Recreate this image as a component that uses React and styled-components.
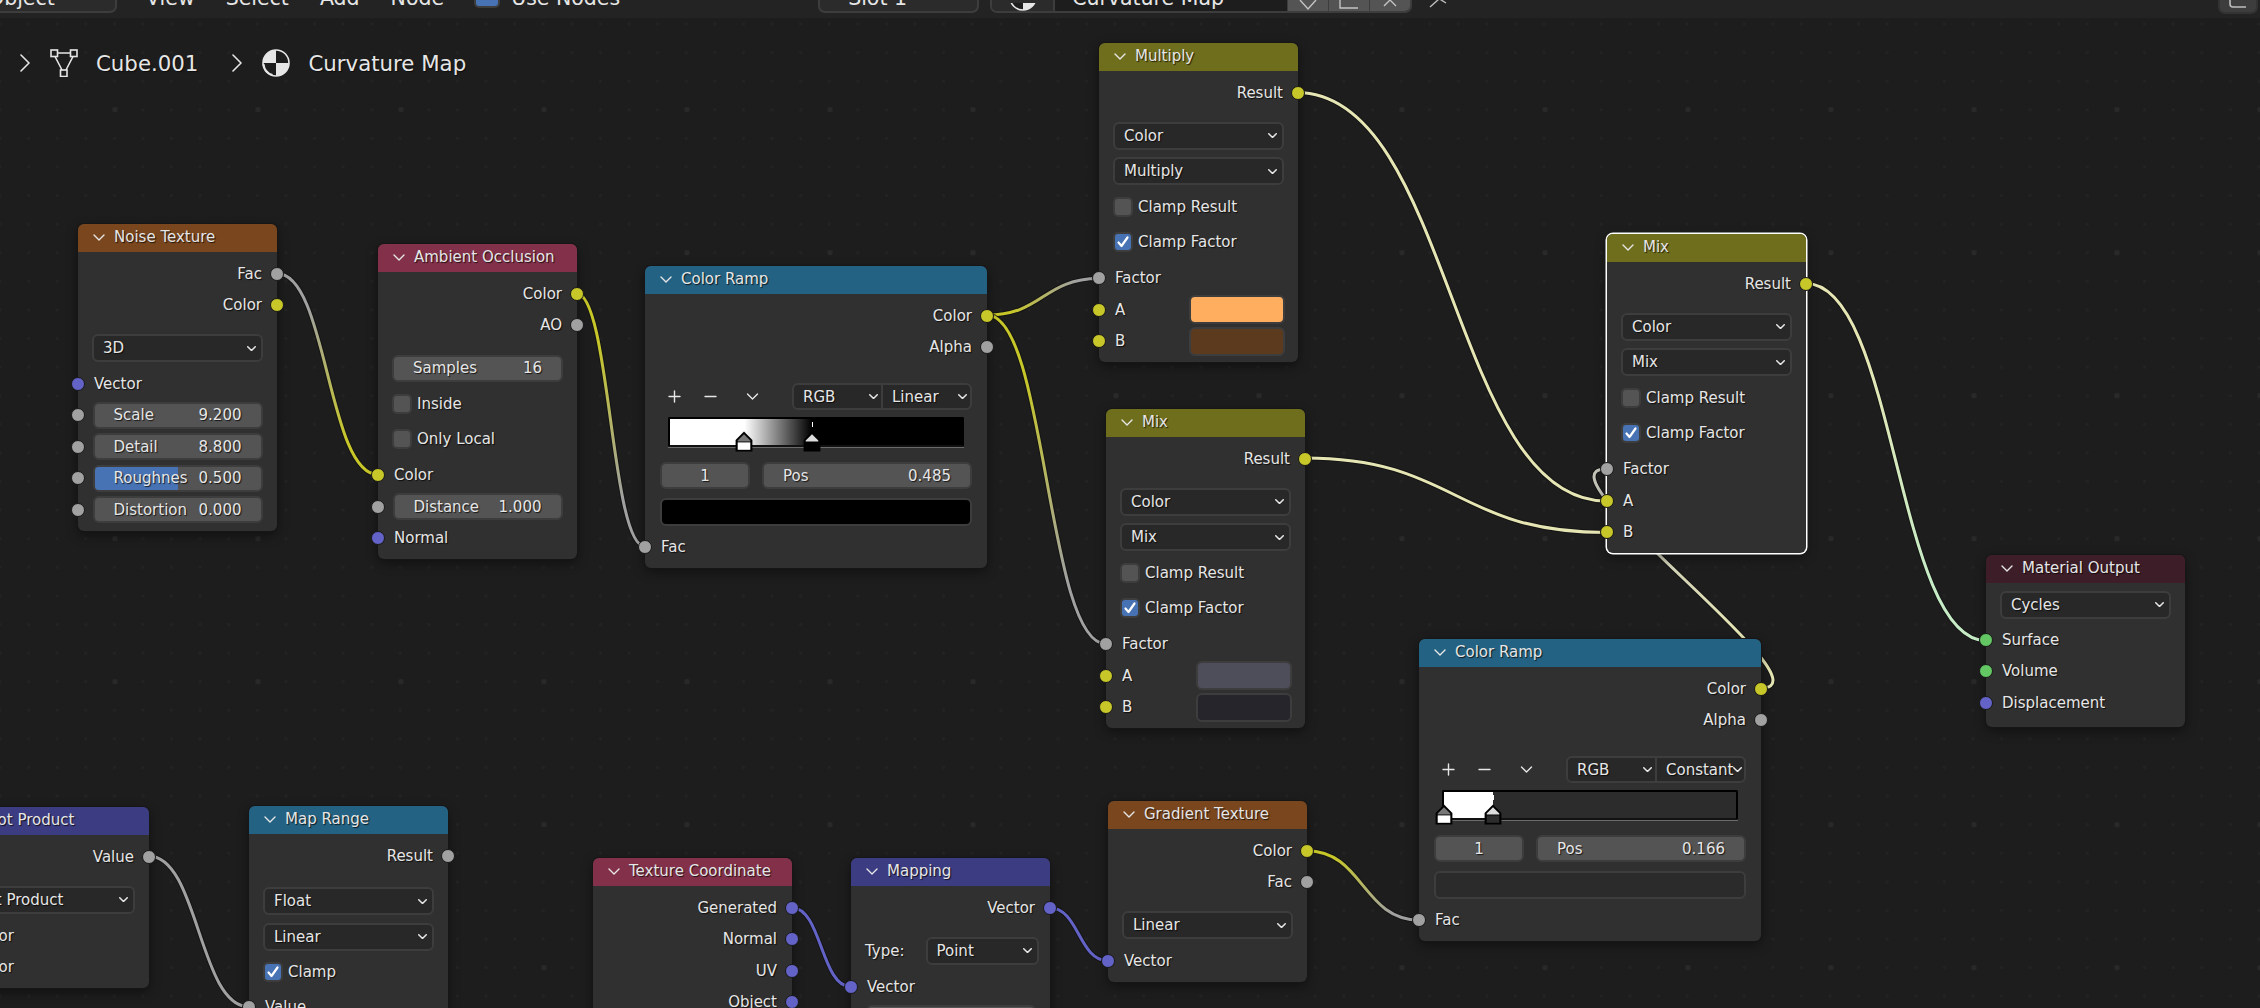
import styled, { createGlobalStyle } from "styled-components";

const YELLOW = "#c7c729";
const GRAY = "#a1a1a1";
const BLUE = "#6363c7";
const GREEN = "#63c763";
const PALE = "#e6e6b4";

const HEAD_TEXTURE = "#79461d";
const HEAD_INPUT = "#83314a";
const HEAD_CONVERT = "#246283";
const HEAD_COLOR = "#6e6e1d";
const HEAD_VECTOR = "#3c3c83";
const HEAD_OUTPUT = "#3d1e28";

// links, in page coordinates (drawn under the nodes)
const wires = [
  { a: [277, 273.6], b: [378, 474.6], c1: GRAY, c2: YELLOW },
  { a: [576, 293], b: [645, 546.5], c1: YELLOW, c2: GRAY },
  { a: [987, 315], b: [1099, 278.6], c1: YELLOW, c2: GRAY },
  { a: [987, 315], b: [1106, 644], c1: YELLOW, c2: GRAY },
  { a: [1297, 92.6], b: [1606, 501], c1: PALE, c2: PALE },
  { a: [1305, 458], b: [1606, 532.5], c1: PALE, c2: PALE },
  { a: [1806, 283.6], b: [1986, 640.7], c1: PALE, c2: "#c6ecc6" },
  { a: [1761, 688], b: [1606, 469], c1: PALE, c2: "#c4c4b8", handle: 75 },
  { a: [148.5, 856], b: [249, 1006.7], c1: GRAY, c2: GRAY },
  { a: [792, 907.7], b: [850.6, 986.7], c1: BLUE, c2: BLUE },
  { a: [1049.6, 907.7], b: [1107.8, 960.7], c1: BLUE, c2: BLUE },
  { a: [1306.7, 850.7], b: [1419, 920], c1: YELLOW, c2: GRAY },
];

const wirePath = ({ a, b, handle }) => {
  const h = handle ?? Math.abs(b[0] - a[0]) * 0.5;
  return `M${a[0]} ${a[1]} C${a[0] + h} ${a[1]} ${b[0] - h} ${b[1]} ${b[0]} ${b[1]}`;
};

const GlobalStyle = createGlobalStyle`
  html, body {
    margin: 0;
    background: #1d1d1d;
  }
  body {
    font-family: "DejaVu Sans", sans-serif;
    color: #e6e6e6;
    overflow: hidden;
  }
`;

const Page = styled.div`
  width: 2260px;
  height: 1008px;
  display: flex;
  flex-direction: column;
  overflow: hidden;
`;

const TopBar = styled.header`
  height: 18px;
  flex: none;
  box-sizing: border-box;
  padding-bottom: 5px;
  background: #232323;
  display: flex;
  align-items: flex-end;
  overflow: hidden;
  font-size: 20.5px;
  line-height: 20px;
`;

const BarBox = styled.div`
  flex: none;
  box-sizing: border-box;
  height: 28px;
  width: ${(p) => p.$w}px;
  margin-left: ${(p) => p.$ml || 0}px;
  padding: 0 0 3px ${(p) => p.$pl || 10}px;
  display: flex;
  align-items: flex-end;
  background: #2b2b2b;
  border: 2px solid #3d3d3d;
  border-radius: 7px;
`;

const Menu = styled.nav`
  display: flex;
  gap: 31px;
  margin-left: 29px;
  margin-bottom: 5.5px;
`;

const MenuItem = styled.span`
  flex: none;
`;

const BarCheck = styled.div`
  flex: none;
  box-sizing: border-box;
  width: 26px;
  height: 24px;
  margin-left: 30px;
  margin-bottom: 5px;
  background: #4772b3;
  border: 2px solid #3d3d3d;
  border-radius: 5px;
`;

const BarLabel = styled.span`
  flex: none;
  margin-left: 11px;
  margin-bottom: 5.5px;
`;

const MaterialGroup = styled.div`
  flex: none;
  box-sizing: border-box;
  width: 422px;
  height: 28px;
  margin-left: 11px;
  display: flex;
  border: 2px solid #3d3d3d;
  border-radius: 7px;
  overflow: hidden;
`;

const MatIconCell = styled.div`
  flex: none;
  width: 61px;
  background: #2b2b2b;
  border-right: 2px solid #3d3d3d;
  display: flex;
  align-items: flex-end;
  justify-content: center;
`;

const MatName = styled.div`
  flex: 1;
  background: #1d1d1d;
  padding-left: 17px;
  line-height: 20px;
  display: flex;
  align-items: flex-end;
  padding-bottom: 3px;
`;

const MatButton = styled.div`
  flex: none;
  width: 40px;
  background: #545454;
  border-left: 1px solid #3d3d3d;
  display: flex;
  align-items: flex-end;
  justify-content: center;
`;

const PinIcon = styled.svg`
  flex: none;
  margin-left: 17px;
  margin-bottom: 5px;
`;

const CornerBox = styled.div`
  flex: none;
  box-sizing: border-box;
  width: 40px;
  height: 28px;
  margin-left: auto;
  margin-right: 2px;
  margin-bottom: -1px;
  background: #3d3d3d;
  border: 2px solid #333;
  border-radius: 7px;
  display: flex;
  align-items: flex-end;
  justify-content: center;
`;

const Canvas = styled.main`
  position: relative;
  flex: 1;
  background-color: #1d1d1d;
  background-image:
    radial-gradient(circle, #292929 2.6px, transparent 3px),
    radial-gradient(circle, #232323 1.3px, transparent 1.7px);
  background-size: 143px 143px, 28.6px 28.6px;
  background-position: 43.5px 20.2px, -14.3px -8.3px;
`;

const WireLayer = styled.svg`
  position: absolute;
  left: 0;
  top: -18px;
  width: 2260px;
  height: 1008px;
`;

const Breadcrumb = styled.div`
  position: absolute;
  left: 20px;
  top: 31px;
  display: flex;
  align-items: center;
  height: 28px;
  font-size: 21.3px;
`;

const CrumbIcon = styled.svg`
  flex: none;
  margin-left: ${(p) => p.$ml}px;
`;

const CrumbText = styled.span`
  margin-left: 18px;
  text-shadow: 1px 1px 1px rgba(0, 0, 0, 0.6);
`;

const NodeBox = styled.section`
  position: absolute;
  left: ${(p) => p.$x}px;
  top: ${(p) => p.$y - 18}px;
  width: ${(p) => p.$w}px;
  background: #303030;
  border-radius: 6px;
  font-size: 15px;
  text-shadow: 1px 1px 1px rgba(0, 0, 0, 0.75);
  box-shadow: ${(p) =>
    p.$selected
      ? "0 0 0 1.5px #fff, 0 4px 12px rgba(0,0,0,.45)"
      : "0 0 0 1px #161616, 0 4px 12px rgba(0,0,0,.45)"};
`;

const NodeHeader = styled.header`
  height: 28px;
  box-sizing: border-box;
  padding: 0 0 2px 15px;
  display: flex;
  align-items: center;
  gap: 9px;
  background: ${(p) => p.$color};
  border-radius: 6px 6px 0 0;
`;

const NodeBody = styled.div`
  display: flex;
  flex-direction: column;
  padding: 6px 0 ${(p) => p.$pb || 5.25}px;
`;

const Row = styled.div`
  position: relative;
  flex: none;
  height: 31.5px;
  box-sizing: border-box;
  margin-top: ${(p) => p.$mt || 0}px;
  padding: ${(p) => (p.$out ? "0 15px 0 0" : "0 13px 0 16px")};
  display: flex;
  align-items: center;
  justify-content: ${(p) => (p.$out ? "flex-end" : "flex-start")};
  ${(p) => p.$wide && "padding: 0 14.5px;"}
`;

const Socket = styled.i`
  position: absolute;
  top: 50%;
  ${(p) => (p.$out ? "right: -7px;" : "left: -7px;")}
  width: 14px;
  height: 14px;
  margin-top: -7px;
  box-sizing: border-box;
  border-radius: 50%;
  background: ${(p) => p.$color};
  border: 1px solid #181818;
`;

const WidgetRow = styled.div`
  flex: none;
  height: 35.5px;
  box-sizing: border-box;
  margin-top: ${(p) => p.$mt || 0}px;
  padding: 0 14px;
  display: flex;
  align-items: center;
  gap: ${(p) => p.$gap || 5}px;
`;

const Dropdown = styled.div`
  box-sizing: border-box;
  flex: ${(p) => (p.$w ? "none" : 1)};
  width: ${(p) => (p.$w ? `${p.$w}px` : "auto")};
  height: 28px;
  margin-left: ${(p) => p.$ml || 0}px;
  padding: 0 5px 0 9px;
  display: flex;
  align-items: center;
  justify-content: space-between;
  background: #282828;
  border: 2px solid #3d3d3d;
  border-radius: 6px;
`;

const Field = styled.div`
  position: relative;
  flex: 1;
  box-sizing: border-box;
  height: 27px;
  padding: 0 19px;
  display: flex;
  align-items: center;
  justify-content: ${(p) => (p.$center ? "center" : "space-between")};
  background: #545454;
  border: 2px solid #3d3d3d;
  border-radius: 6px;
  overflow: hidden;
  white-space: nowrap;
`;

const FieldFill = styled.span`
  position: absolute;
  left: 0;
  top: 0;
  bottom: 0;
  width: ${(p) => p.$value * 100}%;
  background: #4772b3;
`;

const FieldText = styled.span`
  position: relative;
`;

const CheckBox = styled.span`
  flex: none;
  box-sizing: border-box;
  width: 20px;
  height: 20px;
  display: flex;
  align-items: center;
  justify-content: center;
  background: ${(p) => (p.$on ? "#4772b3" : "#545454")};
  border: 2px solid #3d3d3d;
  border-radius: 5px;
`;

const Swatch = styled.span`
  flex: none;
  box-sizing: border-box;
  width: 96px;
  height: 29px;
  margin-left: auto;
  background: ${(p) => p.$color};
  border: 2px solid #3d3d3d;
  border-radius: 6px;
`;

const ChevIcon = styled.svg`
  flex: none;
  fill: none;
  stroke: ${(p) => p.$stroke || "#e6e6e6"};
  stroke-linecap: round;
  stroke-linejoin: round;
`;

const RampTools = styled.div`
  flex: none;
  height: 27px;
  margin-top: 20px;
  padding: 0 15px 0 22.5px;
  display: flex;
  align-items: center;
`;

const ToolIcon = styled.svg`
  flex: none;
  margin-left: ${(p) => p.$ml || 0}px;
  fill: none;
  stroke: #e6e6e6;
  stroke-width: 1.4;
  stroke-linecap: round;
  stroke-linejoin: round;
`;

const Segmented = styled.div`
  flex: none;
  box-sizing: border-box;
  width: 180px;
  height: 27px;
  margin-left: auto;
  display: flex;
  background: #282828;
  border: 2px solid #3d3d3d;
  border-radius: 6px;
`;

const Segment = styled.div`
  box-sizing: border-box;
  flex: none;
  width: ${(p) => p.$w}px;
  padding: 0 3px 0 9px;
  display: flex;
  align-items: center;
  justify-content: space-between;
  ${(p) => p.$divided && "border-left: 2px solid #3d3d3d;"}
`;

const RampBar = styled.div`
  position: relative;
  flex: none;
  box-sizing: border-box;
  height: 30px;
  margin: 7px 23px 0;
  background: ${(p) => p.$fill};
  border: 2px solid #000;
  border-bottom-color: #111;
  border-radius: 2px;

  &::after {
    content: "";
    position: absolute;
    left: -2px;
    right: -2px;
    bottom: -3px;
    height: 1.5px;
    background: #6a6a6a;
  }
`;

const RampHandle = styled.svg`
  position: absolute;
  z-index: 1;
  left: ${(p) => p.$pos * 100}%;
  top: 12px;
  margin-left: -9px;
`;

const RampTick = styled.span`
  position: absolute;
  left: ${(p) => p.$pos * 100}%;
  top: 3px;
  width: 1px;
  height: 5px;
  background: #fff;
`;

const RampParams = styled.div`
  flex: none;
  margin-top: 15px;
  padding: 0 15px;
  display: flex;
  gap: 12px;
`;

const StopField = styled(Field)`
  flex: none;
  width: 90px;
`;

const RampColor = styled.div`
  flex: none;
  box-sizing: border-box;
  height: 28px;
  margin: 9px 15px 0;
  background: ${(p) => p.$color};
  border: 2px solid #3d3d3d;
  border-radius: 6px;
`;

const Chev = ({ w = 12, sw = 1.4, stroke }) => (
  <ChevIcon width={w} height={(w * 7) / 12} viewBox="0 0 12 7" strokeWidth={(sw * 12) / w} $stroke={stroke}>
    <path d="M1 1l5 5 5-5" />
  </ChevIcon>
);

const Node = ({ x, y, w = 199, color, title, selected, pb, children }) => (
  <NodeBox $x={x} $y={y} $w={w} $selected={selected}>
    <NodeHeader $color={color}>
      <Chev w={12} />
      <span>{title}</span>
    </NodeHeader>
    <NodeBody $pb={pb}>{children}</NodeBody>
  </NodeBox>
);

const Output = ({ socket, children }) => (
  <Row $out>
    {children}
    <Socket $out $color={socket} />
  </Row>
);

const Input = ({ socket, mt, children }) => (
  <Row $mt={mt}>
    {children}
    <Socket $color={socket} />
  </Row>
);

const ValueInput = ({ label, value, fill }) => (
  <Row $wide>
    <Socket $color={GRAY} />
    <Field>
      {fill ? <FieldFill $value={fill} /> : null}
      <FieldText>{label}</FieldText>
      <FieldText>{value}</FieldText>
    </Field>
  </Row>
);

const Select = ({ children, mt }) => (
  <WidgetRow $mt={mt}>
    <Dropdown>
      <span>{children}</span>
      <Chev w={9} sw={1.5} />
    </Dropdown>
  </WidgetRow>
);

const Check = ({ on, children }) => (
  <WidgetRow>
    <CheckBox $on={on}>
      {on ? (
        <svg width="14" height="14" viewBox="0 0 14 14" fill="none" stroke="#fff" strokeWidth="2.2" strokeLinecap="round" strokeLinejoin="round">
          <path d="M2.5 7.5l3 3.5 6-8.5" />
        </svg>
      ) : null}
    </CheckBox>
    <span>{children}</span>
  </WidgetRow>
);

const Handle = ({ pos, cap, fill }) => (
  <RampHandle $pos={pos} width="18" height="21" viewBox="0 0 18 21">
    <path d="M9 .6L17.4 9V20.4H.6V9Z" fill="#000" />
    <path d="M9 3.2L15.3 9.5V10.6H2.7V9.5Z" fill={cap} />
    <rect x="2.7" y="11.4" width="12.6" height="7.4" fill={fill} />
  </RampHandle>
);

const ColorRampBody = ({ mode, fill, stops, pos, field }) => (
  <>
    <Output socket={YELLOW}>Color</Output>
    <Output socket={GRAY}>Alpha</Output>
    <RampTools>
      <ToolIcon width="13" height="13" viewBox="0 0 13 13">
        <path d="M6.5 1v11M1 6.5h11" />
      </ToolIcon>
      <ToolIcon $ml={23} width="13" height="13" viewBox="0 0 13 13">
        <path d="M1 6.5h11" />
      </ToolIcon>
      <ToolIcon $ml={29} width="13" height="13" viewBox="0 0 13 13">
        <path d="M1.5 4l5 5 5-5" />
      </ToolIcon>
      <Segmented>
        <Segment $w={87}>
          <span>RGB</span>
          <Chev w={9} sw={1.5} />
        </Segment>
        <Segment $w={89} $divided>
          <span>{mode}</span>
          <Chev w={9} sw={1.5} />
        </Segment>
      </Segmented>
    </RampTools>
    <RampBar $fill={fill}>
      <RampTick $pos={stops[1].pos} />
      {stops.map((s) => (
        <Handle key={s.pos} pos={s.pos} cap={s.cap} fill={s.fill} />
      ))}
    </RampBar>
    <RampParams>
      <StopField $center>1</StopField>
      <Field>
        <span>Pos</span>
        <span>{pos}</span>
      </Field>
    </RampParams>
    <RampColor $color={field} />
    <Input socket={GRAY} mt={4.75}>
      Fac
    </Input>
  </>
);

const MaterialIcon = ({ ml }) => (
  <CrumbIcon $ml={ml} width="28" height="28" viewBox="0 0 28 28">
    <circle cx="14" cy="14" r="13" fill="#1d1d1d" stroke="#e6e6e6" strokeWidth="1.6" />
    <path d="M14 1a13 13 0 0 0-13 13h13z" fill="#e6e6e6" />
    <path d="M14 14h13a13 13 0 0 1-13 13z" fill="#e6e6e6" />
    <path d="M1.5 15a13 13 0 0 0 9 11" fill="none" stroke="#e6e6e6" strokeWidth="2" />
  </CrumbIcon>
);

const App = () => (
  <>
    <GlobalStyle />
    <Page>
      <TopBar>
        <BarBox $w={147} $ml={-30} $pl={16}>
          Object
        </BarBox>
        <Menu>
          <MenuItem>View</MenuItem>
          <MenuItem>Select</MenuItem>
          <MenuItem>Add</MenuItem>
          <MenuItem>Node</MenuItem>
        </Menu>
        <BarCheck />
        <BarLabel>Use Nodes</BarLabel>
        <BarBox $w={161} $ml={198} $pl={28}>
          Slot 1
        </BarBox>
        <MaterialGroup>
          <MatIconCell>
            <svg width="28" height="8" viewBox="0 20 28 8">
              <circle cx="14" cy="14" r="13" fill="#1d1d1d" />
              <path d="M14 14h13a13 13 0 0 1-13 13z" fill="#e6e6e6" />
              <circle cx="14" cy="14" r="13" fill="none" stroke="#e6e6e6" strokeWidth="1.6" />
            </svg>
          </MatIconCell>
          <MatName>Curvature Map</MatName>
          <MatButton>
            <svg width="18" height="11" viewBox="0 0 18 11" fill="none" stroke="#c4c4c4" strokeWidth="1.4">
              <path d="M1 0l8 9 8-9" />
            </svg>
          </MatButton>
          <MatButton>
            <svg width="20" height="11" viewBox="0 0 20 11" fill="none" stroke="#c4c4c4" strokeWidth="1.4">
              <path d="M1 0v8h18" />
            </svg>
          </MatButton>
          <MatButton>
            <svg width="18" height="11" viewBox="0 0 18 11" fill="none" stroke="#c4c4c4" strokeWidth="1.4">
              <path d="M9 0L3 6M9 0l6 6" />
            </svg>
          </MatButton>
        </MaterialGroup>
        <PinIcon width="20" height="10" viewBox="0 0 20 10" fill="none" stroke="#bdbdbd" strokeWidth="1.4">
          <path d="M1 9l9-8M9 0l8 5" />
        </PinIcon>
        <CornerBox>
          <svg width="18" height="9" viewBox="0 0 18 9" fill="none" stroke="#bdbdbd" strokeWidth="1.6" style={{ marginBottom: 3 }}>
            <path d="M1 0v4q0 3 3 3h13" />
          </svg>
        </CornerBox>
      </TopBar>

      <Canvas>
        <WireLayer viewBox="0 0 2260 1008" fill="none">
          <defs>
            {wires.map((w, i) => (
              <linearGradient key={i} id={`wire${i}`} gradientUnits="userSpaceOnUse" x1={w.a[0]} y1={w.a[1]} x2={w.b[0]} y2={w.b[1]}>
                <stop offset="0.2" stopColor={w.c1} />
                <stop offset="0.8" stopColor={w.c2} />
              </linearGradient>
            ))}
          </defs>
          {wires.map((w, i) => (
            <g key={i}>
              <path d={wirePath(w)} stroke="#111" strokeOpacity="0.75" strokeWidth="5" />
              <path d={wirePath(w)} stroke={`url(#wire${i})`} strokeWidth="3" />
            </g>
          ))}
        </WireLayer>

        <Breadcrumb>
          <ChevIcon width="10" height="18" viewBox="0 0 10 18" strokeWidth="1.6">
            <path d="M1 1l8 8-8 8" />
          </ChevIcon>
          <CrumbIcon $ml={20} width="28" height="28" viewBox="0 0 28 28" fill="none" stroke="#e6e6e6" strokeWidth="1.6">
            <rect x="1" y="1" width="6.5" height="6.5" />
            <rect x="20.5" y="1" width="6.5" height="6.5" />
            <rect x="10.5" y="21" width="6.5" height="6.5" />
            <path d="M7.5 4h13M5 7.5l7 13.5M23 7.5l-7 13.5" />
          </CrumbIcon>
          <CrumbText>Cube.001</CrumbText>
          <ChevIcon style={{ marginLeft: 34 }} width="10" height="18" viewBox="0 0 10 18" strokeWidth="1.6">
            <path d="M1 1l8 8-8 8" />
          </ChevIcon>
          <MaterialIcon ml={20} />
          <CrumbText>Curvature Map</CrumbText>
        </Breadcrumb>

        <Node x={78} y={224} color={HEAD_TEXTURE} title="Noise Texture">
          <Output socket={GRAY}>Fac</Output>
          <Output socket={YELLOW}>Color</Output>
          <Select mt={9.5}>3D</Select>
          <Input socket={BLUE} mt={2}>
            Vector
          </Input>
          <ValueInput label="Scale" value="9.200" />
          <ValueInput label="Detail" value="8.800" />
          <ValueInput label="Roughnes" value="0.500" fill={0.5} />
          <ValueInput label="Distortion" value="0.000" />
        </Node>

        <Node x={378} y={244} color={HEAD_INPUT} title="Ambient Occlusion">
          <Output socket={YELLOW}>Color</Output>
          <Output socket={GRAY}>AO</Output>
          <WidgetRow $mt={9.5}>
            <Field>
              <span>Samples</span>
              <span>16</span>
            </Field>
          </WidgetRow>
          <Check>Inside</Check>
          <Check>Only Local</Check>
          <Input socket={YELLOW} mt={2.25}>
            Color
          </Input>
          <ValueInput label="Distance" value="1.000" />
          <Input socket={BLUE}>Normal</Input>
        </Node>

        <Node x={645} y={266} w={342} color={HEAD_CONVERT} title="Color Ramp">
          <ColorRampBody
            mode="Linear"
            pos="0.485"
            field="#000"
            fill="linear-gradient(to right, #fff 25.5%, #000 48.5%)"
            stops={[
              { pos: 0.255, cap: "#777", fill: "#fff" },
              { pos: 0.485, cap: "#ddd", fill: "#000" },
            ]}
          />
        </Node>

        <Node x={1099} y={43} color={HEAD_COLOR} title="Multiply">
          <Output socket={YELLOW}>Result</Output>
          <Select mt={9.5}>Color</Select>
          <Select>Multiply</Select>
          <Check>Clamp Result</Check>
          <Check on>Clamp Factor</Check>
          <Input socket={GRAY} mt={2.25}>
            Factor
          </Input>
          <Input socket={YELLOW}>
            A
            <Swatch $color="#ffae60" />
          </Input>
          <Input socket={YELLOW}>
            B
            <Swatch $color="#5c3a1e" />
          </Input>
        </Node>

        <Node x={1106} y={409} color={HEAD_COLOR} title="Mix">
          <Output socket={YELLOW}>Result</Output>
          <Select mt={9.5}>Color</Select>
          <Select>Mix</Select>
          <Check>Clamp Result</Check>
          <Check on>Clamp Factor</Check>
          <Input socket={GRAY} mt={2.25}>
            Factor
          </Input>
          <Input socket={YELLOW}>
            A
            <Swatch $color="#4e4d5a" />
          </Input>
          <Input socket={YELLOW}>
            B
            <Swatch $color="#26252b" />
          </Input>
        </Node>

        <Node x={1607} y={234} color={HEAD_COLOR} title="Mix" selected>
          <Output socket={YELLOW}>Result</Output>
          <Select mt={9.5}>Color</Select>
          <Select>Mix</Select>
          <Check>Clamp Result</Check>
          <Check on>Clamp Factor</Check>
          <Input socket={GRAY} mt={2.25}>
            Factor
          </Input>
          <Input socket={YELLOW}>A</Input>
          <Input socket={YELLOW}>B</Input>
        </Node>

        <Node x={1986} y={555} color={HEAD_OUTPUT} title="Material Output" pb={8}>
          <WidgetRow $mt={-2}>
            <Dropdown>
              <span>Cycles</span>
              <Chev w={9} sw={1.5} />
            </Dropdown>
          </WidgetRow>
          <Input socket={GREEN} mt={1.5}>
            Surface
          </Input>
          <Input socket={GREEN}>Volume</Input>
          <Input socket={BLUE}>Displacement</Input>
        </Node>

        <Node x={1419} y={639} w={342} color={HEAD_CONVERT} title="Color Ramp">
          <ColorRampBody
            mode="Constant"
            pos="0.166"
            field="#2b2b2b"
            fill="linear-gradient(to right, #fff 16.8%, #2c2c2c 16.8%)"
            stops={[
              { pos: 0, cap: "#777", fill: "#fff" },
              { pos: 0.168, cap: "#ddd", fill: "#2c2c2c" },
            ]}
          />
        </Node>

        <Node x={-50} y={807} color={HEAD_VECTOR} title="Dot Product">
          <Output socket={GRAY}>Value</Output>
          <Select mt={9.5}>Dot Product</Select>
          <Input socket={BLUE} mt={2.25}>
            Vector
          </Input>
          <Input socket={BLUE}>Vector</Input>
        </Node>

        <Node x={249} y={806} color={HEAD_CONVERT} title="Map Range">
          <Output socket={GRAY}>Result</Output>
          <Select mt={12}>Float</Select>
          <Select>Linear</Select>
          <Check on>Clamp</Check>
          <Input socket={GRAY} mt={1}>
            Value
          </Input>
          <ValueInput label="From Min" value="0.000" />
        </Node>

        <Node x={593} y={858} color={HEAD_INPUT} title="Texture Coordinate">
          <Output socket={BLUE}>Generated</Output>
          <Output socket={BLUE}>Normal</Output>
          <Output socket={BLUE}>UV</Output>
          <Output socket={BLUE}>Object</Output>
          <Output socket={BLUE}>Camera</Output>
        </Node>

        <Node x={851} y={858} color={HEAD_VECTOR} title="Mapping">
          <Output socket={BLUE}>Vector</Output>
          <WidgetRow $mt={9.5} $gap={0}>
            <span>Type:</span>
            <Dropdown $w={113} $ml={16}>
              <span>Point</span>
              <Chev w={9} sw={1.5} />
            </Dropdown>
          </WidgetRow>
          <Input socket={BLUE} mt={2.25}>
            Vector
          </Input>
          <ValueInput label="Location" value="0 m" />
        </Node>

        <Node x={1108} y={801} color={HEAD_TEXTURE} title="Gradient Texture">
          <Output socket={YELLOW}>Color</Output>
          <Output socket={GRAY}>Fac</Output>
          <Select mt={9.5}>Linear</Select>
          <Input socket={BLUE} mt={2}>
            Vector
          </Input>
        </Node>
      </Canvas>
    </Page>
  </>
);

export default App;
